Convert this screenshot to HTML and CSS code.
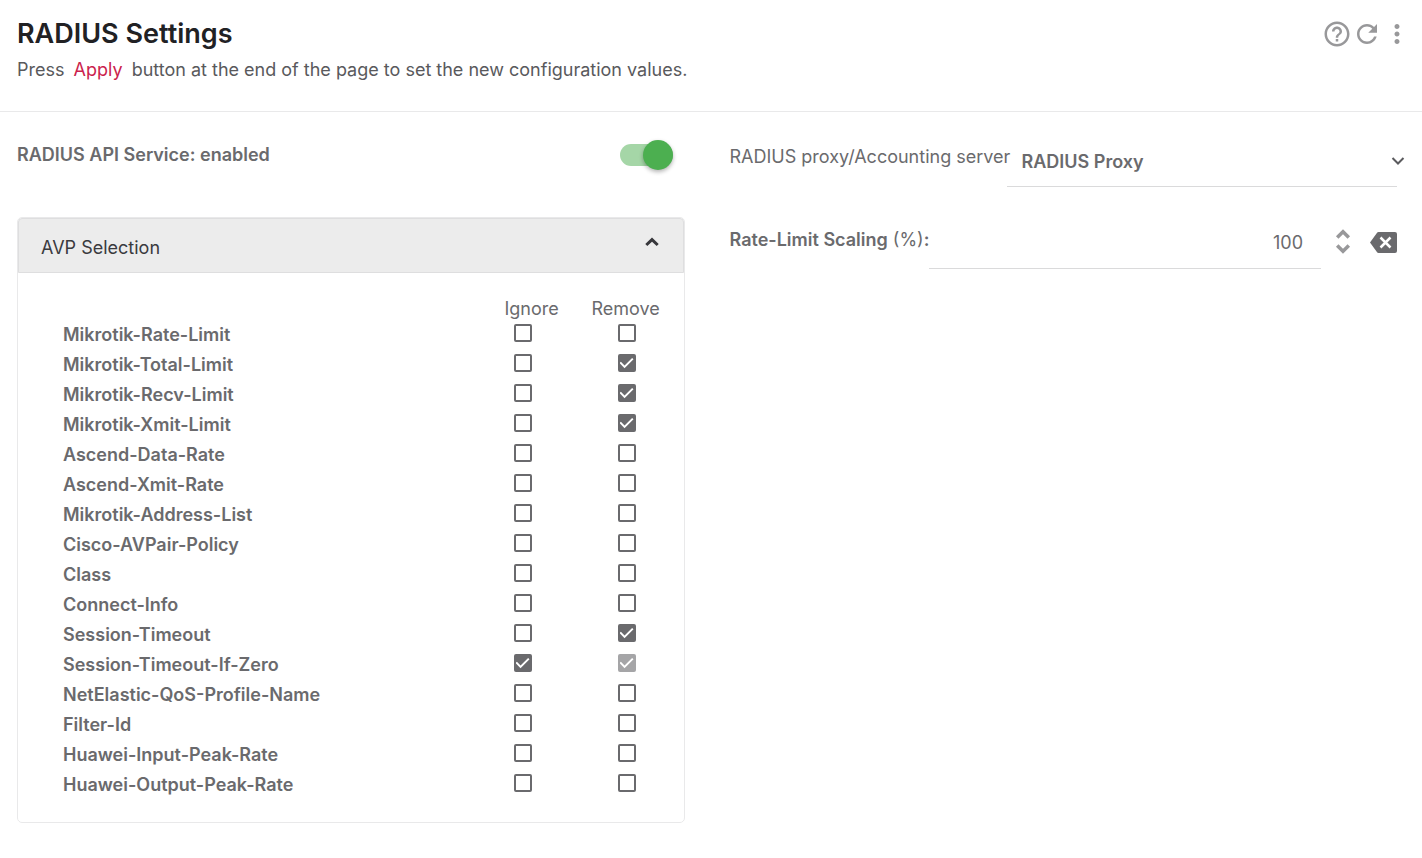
FILE: index.html
```
<!DOCTYPE html>
<html lang="en">
<head>
<meta charset="utf-8">
<meta name="viewport" content="width=device-width, initial-scale=1">
<title>RADIUS Settings</title>
<link rel="stylesheet" href="styles.css">
</head>
<body>
<header class="page-header">
  <div class="heading">
    <h1 class="title">RADIUS Settings</h1>
    <p class="hint">Press <span class="keyword">Apply</span> button at the end of the page to set the new configuration values.</p>
  </div>
  <div class="actions">
    <button class="icon-button" type="button" aria-label="Help"><svg viewBox="0 0 24 24"><path d="M11 18h2v-2h-2v2zm1-16C6.48 2 2 6.48 2 12s4.48 10 10 10 10-4.48 10-10S17.520 2 12 2zm0 18c-4.410 0-8-3.590-8-8s3.590-8 8-8 8 3.590 8 8-3.590 8-8 8zm0-14c-2.210 0-4 1.790-4 4h2c0-1.100.9-2 2-2s2 .9 2 2c0 2-3 1.750-3 5h2c0-2.250 3-2.500 3-5 0-2.210-1.790-4-4-4z"/></svg></button>
    <button class="icon-button" type="button" aria-label="Refresh"><svg viewBox="0 0 24 24"><path d="M17.650 6.350C16.200 4.900 14.210 4 12 4c-4.420 0-7.990 3.580-7.990 8s3.570 8 7.990 8c3.730 0 6.840-2.550 7.730-6h-2.080c-.82 2.330-3.040 4-5.650 4-3.310 0-6-2.690-6-6s2.690-6 6-6c1.660 0 3.140.69 4.220 1.780L13 11h7V4l-2.350 2.350z"/></svg></button>
    <button class="icon-button" type="button" aria-label="More"><svg viewBox="0 0 24 24"><path d="M12 8c1.100 0 2-.9 2-2s-.9-2-2-2-2 .9-2 2 .9 2 2 2zm0 2c-1.100 0-2 .9-2 2s.9 2 2 2 2-.9 2-2-.9-2-2-2zm0 6c-1.100 0-2 .9-2 2s.9 2 2 2 2-.9 2-2-.9-2-2-2z"/></svg></button>
  </div>
</header>
<main class="content">
  <section class="column">
    <div class="service">
      <label class="strong" for="service">RADIUS API Service: enabled</label>
      <input class="switch" id="service" type="checkbox" role="switch" checked>
    </div>
    <div class="panel">
      <button class="panel-header" type="button" aria-expanded="true">
        <span>AVP Selection</span>
        <svg class="panel-arrow" viewBox="0 0 14 9"><path d="M1.300 8 7 2.600 12.700 8"/></svg>
      </button>
      <div class="panel-body">
        <table class="avp">
          <thead><tr><td class="name"></td><th class="option option-ignore" scope="col">Ignore</th><th class="option option-remove" scope="col">Remove</th></tr></thead>
          <tbody>
            <tr><th scope="row">Mikrotik-Rate-Limit</th><td><input class="tick" type="checkbox" aria-label="Ignore Mikrotik-Rate-Limit"></td><td><input class="tick" type="checkbox" aria-label="Remove Mikrotik-Rate-Limit"></td></tr>
            <tr><th scope="row">Mikrotik-Total-Limit</th><td><input class="tick" type="checkbox" aria-label="Ignore Mikrotik-Total-Limit"></td><td><input class="tick" type="checkbox" aria-label="Remove Mikrotik-Total-Limit" checked></td></tr>
            <tr><th scope="row">Mikrotik-Recv-Limit</th><td><input class="tick" type="checkbox" aria-label="Ignore Mikrotik-Recv-Limit"></td><td><input class="tick" type="checkbox" aria-label="Remove Mikrotik-Recv-Limit" checked></td></tr>
            <tr><th scope="row">Mikrotik-Xmit-Limit</th><td><input class="tick" type="checkbox" aria-label="Ignore Mikrotik-Xmit-Limit"></td><td><input class="tick" type="checkbox" aria-label="Remove Mikrotik-Xmit-Limit" checked></td></tr>
            <tr><th scope="row">Ascend-Data-Rate</th><td><input class="tick" type="checkbox" aria-label="Ignore Ascend-Data-Rate"></td><td><input class="tick" type="checkbox" aria-label="Remove Ascend-Data-Rate"></td></tr>
            <tr><th scope="row">Ascend-Xmit-Rate</th><td><input class="tick" type="checkbox" aria-label="Ignore Ascend-Xmit-Rate"></td><td><input class="tick" type="checkbox" aria-label="Remove Ascend-Xmit-Rate"></td></tr>
            <tr><th scope="row">Mikrotik-Address-List</th><td><input class="tick" type="checkbox" aria-label="Ignore Mikrotik-Address-List"></td><td><input class="tick" type="checkbox" aria-label="Remove Mikrotik-Address-List"></td></tr>
            <tr><th scope="row">Cisco-AVPair-Policy</th><td><input class="tick" type="checkbox" aria-label="Ignore Cisco-AVPair-Policy"></td><td><input class="tick" type="checkbox" aria-label="Remove Cisco-AVPair-Policy"></td></tr>
            <tr><th scope="row">Class</th><td><input class="tick" type="checkbox" aria-label="Ignore Class"></td><td><input class="tick" type="checkbox" aria-label="Remove Class"></td></tr>
            <tr><th scope="row">Connect-Info</th><td><input class="tick" type="checkbox" aria-label="Ignore Connect-Info"></td><td><input class="tick" type="checkbox" aria-label="Remove Connect-Info"></td></tr>
            <tr><th scope="row">Session-Timeout</th><td><input class="tick" type="checkbox" aria-label="Ignore Session-Timeout"></td><td><input class="tick" type="checkbox" aria-label="Remove Session-Timeout" checked></td></tr>
            <tr><th scope="row">Session-Timeout-If-Zero</th><td><input class="tick" type="checkbox" aria-label="Ignore Session-Timeout-If-Zero" checked></td><td><input class="tick" type="checkbox" aria-label="Remove Session-Timeout-If-Zero" checked disabled></td></tr>
            <tr><th scope="row">NetElastic-QoS-Profile-Name</th><td><input class="tick" type="checkbox" aria-label="Ignore NetElastic-QoS-Profile-Name"></td><td><input class="tick" type="checkbox" aria-label="Remove NetElastic-QoS-Profile-Name"></td></tr>
            <tr><th scope="row">Filter-Id</th><td><input class="tick" type="checkbox" aria-label="Ignore Filter-Id"></td><td><input class="tick" type="checkbox" aria-label="Remove Filter-Id"></td></tr>
            <tr><th scope="row">Huawei-Input-Peak-Rate</th><td><input class="tick" type="checkbox" aria-label="Ignore Huawei-Input-Peak-Rate"></td><td><input class="tick" type="checkbox" aria-label="Remove Huawei-Input-Peak-Rate"></td></tr>
            <tr><th scope="row">Huawei-Output-Peak-Rate</th><td><input class="tick" type="checkbox" aria-label="Ignore Huawei-Output-Peak-Rate"></td><td><input class="tick" type="checkbox" aria-label="Remove Huawei-Output-Peak-Rate"></td></tr>
          </tbody>
        </table>
      </div>
    </div>
  </section>
  <section class="column fields">
    <div class="field">
      <label class="label-mode" for="mode">RADIUS proxy/Accounting server</label>
      <div class="select-wrap">
        <select class="select" id="mode"><option>RADIUS Proxy</option><option>Accounting server</option></select>
        <svg class="select-arrow" viewBox="0 0 14 10"><path d="M1.500 2 7 7.500 12.500 2"/></svg>
      </div>
    </div>
    <div class="field">
      <label class="label-scale" for="scaling"><span class="strong">Rate-Limit Scaling</span> (%)<span class="strong">:</span></label>
      <input class="number" id="scaling" type="text" inputmode="numeric" value="100">
      <div class="stepper">
        <button class="step" type="button" aria-label="Increase"><svg viewBox="0 0 14 10"><path d="M1.200 8.500 7 2.700l5.800 5.800"/></svg></button>
        <button class="step" type="button" aria-label="Decrease"><svg viewBox="0 0 14 10"><path d="M1.200 1.500 7 7.300l5.800-5.800"/></svg></button>
      </div>
      <button class="clear" type="button" aria-label="Clear"><svg viewBox="0 0 27 21"><path class="clear-shape" d="M8.500 0H25a2 2 0 0 1 2 2v17a2 2 0 0 1-2 2H8.500a2 2 0 0 1-1.600-.9L0 10.500 6.900.9A2 2 0 0 1 8.500 0z"/><path class="clear-cross" d="m10.500 5.500 10 10m0-10-10 10"/></svg></button>
    </div>
  </section>
</main>
</body>
</html>
```
FILE: styles.css
```
* { box-sizing: border-box; }

body {
  margin: 0;
  background: #fff;
  color: #6a6a6d;
  font: 18px/24px Inter, "Liberation Sans", sans-serif;
}

button, input, select { font: inherit; color: inherit; }

button {
  padding: 0;
  border: 0;
  background: none;
  cursor: pointer;
}

svg { display: block; overflow: visible; }

.strong { font-weight: 600; }

.page-header {
  display: flex;
  justify-content: space-between;
  align-items: flex-start;
  padding: 18px 10px 29px 17px;
  border-bottom: 1px solid #e9e9ea;
}

.title {
  margin: 0;
  color: #212124;
  font-size: 27px;
  line-height: 32px;
  font-weight: 600;
}

.hint {
  margin: 8px 0 0;
  color: #59595c;
}

.keyword { margin: 0 4px; color: #cb1f4d; }

.actions { display: flex; }

.icon-button { width: 30px; height: 32px; }
.icon-button svg { width: 30px; height: 30px; fill: #98989a; }

.content {
  display: grid;
  grid-template-columns: 1fr 1fr;
  gap: 45px;
  padding: 26px 25px 35px 17px;
}

.column { min-width: 0; }

.service {
  display: flex;
  justify-content: space-between;
  align-items: center;
  height: 34px;
  padding-right: 12px;
}

.switch {
  appearance: none;
  display: flex;
  align-items: center;
  width: 53px;
  height: 22px;
  margin: 0;
  border-radius: 11px;
  background: #a5d6a7;
}

.switch::before {
  content: "";
  width: 30px;
  height: 30px;
  flex: none;
  border-radius: 50%;
  background: #4caf50;
  box-shadow: 0 2px 4px rgb(0 0 0 / 30%);
}

.switch:checked { justify-content: flex-end; }

.panel {
  margin-top: 45px;
  border: 1px solid #e9e9ea;
  border-radius: 5px;
}

.panel-header {
  display: flex;
  justify-content: space-between;
  align-items: center;
  width: 100%;
  height: 55px;
  padding: 4px 24px 0 22px;
  border: 1px solid #dededf;
  border-radius: 4px 4px 0 0;
  background: #ececec;
  color: #3a3a3e;
}

.panel-arrow {
  width: 14px;
  height: 9px;
  margin-bottom: 12px;
  fill: none;
  stroke: #37373b;
  stroke-width: 3;
}

.panel-body { padding: 24px 7px 22px 45px; }

.avp {
  width: 100%;
  border-collapse: collapse;
  table-layout: fixed;
}

.avp th, .avp td { padding: 0; text-align: left; vertical-align: top; }
.avp thead th { font-weight: 400; line-height: 23px; }
.avp tbody th { height: 30px; padding-top: 3px; font-weight: 600; }
.avp .option { width: 104px; }
.avp .option-ignore { padding-left: 36px; }
.avp .option-remove { padding-left: 19px; }
.avp tbody td { padding: 4px 0 0 45px; }

.tick {
  appearance: none;
  display: grid;
  place-items: center;
  width: 18px;
  height: 18px;
  margin: 0;
  border: 2px solid #6a6a6d;
  border-radius: 2px;
}

.tick:checked { background: #6a6a6d; }

.tick:checked::before {
  content: "";
  width: 14px;
  height: 11px;
  background: #fff;
  clip-path: polygon(0 50%, 10% 38%, 36% 72%, 90% 4%, 100% 16%, 36% 98%);
}

.tick:disabled { opacity: 0.6; }

.fields { padding-top: 6px; }

.field { display: flex; align-items: flex-start; }

.field + .field { margin-top: 34px; }

.field label { flex: none; white-space: nowrap; }

.label-mode { width: 277px; padding-top: 1px; }
.label-scale { width: 199px; padding-top: 7px; }

.select-wrap { position: relative; flex: 1; min-width: 0; }

.select {
  appearance: none;
  width: 100%;
  height: 43px;
  padding: 0 20px 7px 15px;
  border: 0;
  border-bottom: 1px solid #dadadb;
  border-radius: 0;
  background: none;
  font-weight: 600;
}

.select-arrow {
  position: absolute;
  top: 12px;
  right: -8px;
  width: 14px;
  height: 10px;
  fill: none;
  stroke: #5b5b5e;
  stroke-width: 2;
  pointer-events: none;
}

.number {
  flex: 1;
  min-width: 0;
  height: 48px;
  padding: 0 18px 4px;
  border: 0;
  border-bottom: 1px solid #dadadb;
  background: none;
  text-align: right;
}

.stepper {
  display: grid;
  gap: 5px;
  margin: 8px 20px 0 15px;
}

.step, .step svg { width: 14px; height: 10px; }
.step svg { fill: none; stroke: #98989a; stroke-width: 3.5; }

.clear { margin-top: 11px; }
.clear svg { width: 27px; height: 21px; }
.clear-shape { fill: #6a6a6d; }
.clear-cross { fill: none; stroke: #fff; stroke-width: 2.5; }
```
